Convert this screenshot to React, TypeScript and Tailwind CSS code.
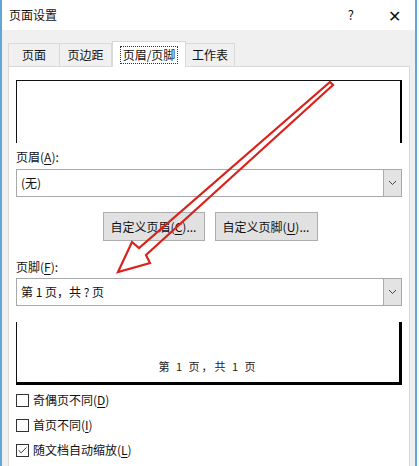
import { Check } from 'lucide-react';

const font = { fontFamily: '"Microsoft YaHei", "Noto Sans CJK SC", "Noto Sans", sans-serif' };

function Key({ k }: { k: string }) {
  return (
    <>
      (<span className="underline underline-offset-2">{k}</span>)
    </>
  );
}

function Chevron() {
  return (
    <svg width="9" height="6" viewBox="0 0 9 6" fill="none">
      <path d="M1 1 L4.5 4.5 L8 1" stroke="#444" strokeWidth="1" />
    </svg>
  );
}

function Select({ value }: { value: string }) {
  return (
    <div className="flex h-[28px] border border-[#a9a9a9] bg-white">
      <div className="flex-1 flex items-center pl-[4px] text-[12px] text-[#111] whitespace-pre">{value}</div>
      <div className="w-[18px] flex items-center justify-center bg-[#e3e3e3] border-l border-[#acacac]">
        <Chevron />
      </div>
    </div>
  );
}

function Checkbox({ checked, label, k }: { checked?: boolean; label: string; k: string }) {
  return (
    <div className="flex items-center h-[20px] mb-[5px]">
      <div className="w-[13px] h-[13px] border border-[#333] bg-white flex items-center justify-center">
        {checked && <Check className="w-[11px] h-[11px] text-[#222]" strokeWidth={2} />}
      </div>
      <span className="ml-[4px] text-[12px] text-[#111]">
        {label}
        <Key k={k} />
      </span>
    </div>
  );
}

export default function App() {
  const tabs = [
    { name: '页面', w: 'w-[52px]' },
    { name: '页边距', w: 'w-[53px]' },
    { name: '页眉/页脚', w: 'w-[74px]', active: true },
    { name: '工作表', w: 'w-[50px]' },
  ];

  return (
    <div className="relative w-[419px] h-[466px] overflow-hidden bg-white" style={font}>
      <div className="flex h-full w-[417px] border-l-2 border-r-2 border-[#62a6d8] bg-[#f0f0f0]">
        <div className="flex flex-col flex-1 overflow-hidden">
          {/* title bar */}
          <div className="shrink-0 h-[30px] bg-white flex items-center text-[12px] text-[#111]">
            <span className="ml-[7px]">页面设置</span>
            <span className="ml-auto mr-[34px] text-[13px]">?</span>
            <span className="mr-[14px] text-[16px] font-light leading-none">✕</span>
          </div>

          {/* tabs */}
          <div className="shrink-0 flex items-end h-[36px] pl-[6px] text-[12px] text-[#111]">
            {tabs.map((t) =>
              t.active ? (
                <div
                  key={t.name}
                  className={`${t.w} h-[26px] -mb-px z-10 bg-white border border-b-0 border-[#d9d9d9] flex items-center justify-center`}
                >
                  <span className="outline outline-1 outline-dotted outline-[#333] px-[2px] leading-[16px]">{t.name}</span>
                </div>
              ) : (
                <div
                  key={t.name}
                  className={`${t.w} h-[23px] border border-b-0 border-[#d9d9d9] -ml-px first:ml-0 flex items-center justify-center`}
                >
                  {t.name}
                </div>
              )
            )}
          </div>

          {/* panel */}
          <div className="shrink-0 h-[420px] bg-white border border-[#d9d9d9] ml-[6px] mr-[5px] px-[7px] pt-[13px] text-[12px] text-[#111]">
            <div className="h-[63px] border-t border-l border-[#111] border-r-2 border-r-black" />

            <div className="mt-[6px] h-[16px] leading-[16px]">
              页眉<Key k="A" />:
            </div>
            <div className="mt-[4px]">
              <Select value="(无)" />
            </div>

            <div className="flex justify-center gap-[10px] mt-[15px] pl-[2px]">
              <button className="w-[102px] h-[29px] bg-[#e1e1e1] border border-[#adadad] text-[12px]">
                自定义页眉<Key k="C" />...
              </button>
              <button className="w-[103px] h-[29px] bg-[#e1e1e1] border border-[#adadad] text-[12px]">
                自定义页脚<Key k="U" />...
              </button>
            </div>

            <div className="mt-[18px] h-[16px] leading-[16px]">
              页脚<Key k="F" />:
            </div>
            <div className="mt-[3px]">
              <Select value="第 1 页，共 ? 页" />
            </div>

            <div className="mt-[16px] h-[63px] border-l border-[#111] border-r-[3px] border-b-[3px] border-r-black border-b-black flex items-end justify-center pb-[8px]">
              <span className="text-[11px] tracking-[2px] text-[#222]">第 1 页，共 1 页</span>
            </div>

            <div className="mt-[5px]">
              <Checkbox label="奇偶页不同" k="D" />
              <Checkbox label="首页不同" k="I" />
              <Checkbox checked label="随文档自动缩放" k="L" />
            </div>
          </div>
        </div>
      </div>

      {/* red arrow annotation */}
      <svg className="absolute left-0 top-0 pointer-events-none" width="419" height="466" viewBox="0 0 419 466">
        <path
          d="M118 272 L132 242 L139 248 L330 82 L333 85 L146 255 L150 263 Z"
          fill="none"
          stroke="#d9221c"
          strokeWidth="2.2"
          strokeLinejoin="miter"
        />
      </svg>
    </div>
  );
}
